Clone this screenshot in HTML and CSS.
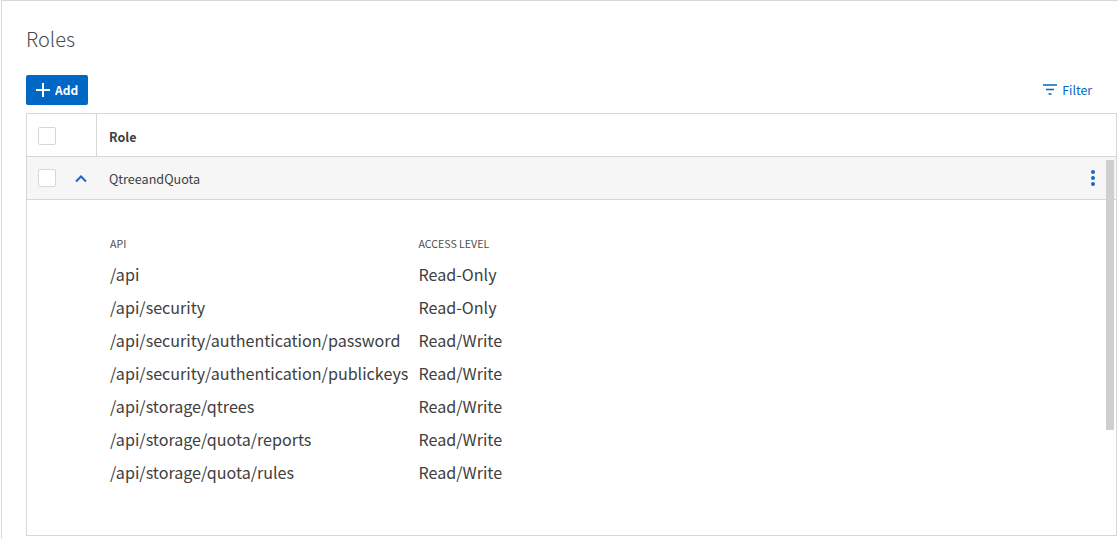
FILE: index.html
```html
<!DOCTYPE html>
<html lang="en">
<head>
<meta charset="utf-8">
<title>Roles</title>
<link rel="stylesheet" href="styles.css">
</head>
<body>
<main class="panel">
  <h1 class="title">Roles</h1>
  <div class="toolbar">
    <button class="add-btn" type="button">
      <svg class="add-icon" width="16" height="16" viewBox="0 0 16 16"><path d="M8 1v14M1 8h14" stroke="#fff" stroke-width="2" fill="none"/></svg>
      <span>Add</span>
    </button>
    <button class="filter-btn" type="button">
      <svg width="14" height="11" viewBox="0 0 14 11"><path d="M0 1h14M3 5.500h8M5.500 10h3" stroke="#0067c5" stroke-width="1.500" fill="none"/></svg>
      <span>Filter</span>
    </button>
  </div>
  <section class="table">
    <div class="scrollbar"></div>
    <div class="head-row">
      <div class="head-check"><span class="checkbox"></span></div>
      <div class="head-role">Role</div>
    </div>
    <div class="data-row">
      <div class="row-check"><span class="checkbox"></span></div>
      <div class="row-toggle">
        <svg width="12" height="8" viewBox="0 0 12 8"><path d="M1 6.500l5-5 5 5" stroke="#1a66c9" stroke-width="2" fill="none"/></svg>
      </div>
      <div class="row-name">QtreeandQuota</div>
      <div class="row-menu"><i></i><i></i><i></i></div>
    </div>
    <div class="details">
      <div class="detail-grid">
        <div class="label">API</div><div class="label">ACCESS LEVEL</div>
        <div class="cell">/api</div><div class="cell">Read-Only</div>
        <div class="cell">/api/security</div><div class="cell">Read-Only</div>
        <div class="cell">/api/security/authentication/password</div><div class="cell">Read/Write</div>
        <div class="cell">/api/security/authentication/publickeys</div><div class="cell">Read/Write</div>
        <div class="cell">/api/storage/qtrees</div><div class="cell">Read/Write</div>
        <div class="cell">/api/storage/quota/reports</div><div class="cell">Read/Write</div>
        <div class="cell">/api/storage/quota/rules</div><div class="cell">Read/Write</div>
      </div>
    </div>
  </section>
</main>
</body>
</html>
```
FILE: styles.css
```css
* { box-sizing: border-box; }
html, body { margin: 0; height: 538px; overflow: hidden; background: #fff; }
body {
  font-family: "Noto Sans CJK SC", "Noto Sans CJK JP", "Open Sans", sans-serif;
  color: #404040;
}
.panel {
  margin-left: 1px;
  width: 1117px;
  height: 538px;
  border-top: 1px solid #d6d6d6;
  border-left: 1px solid #d6d6d6;
  padding: 0 0 0 24px;
}
.title {
  margin: 0;
  padding-top: 24px;
  height: 74px;
  font-size: 20px;
  line-height: 27px;
  font-weight: 300;
  color: #4a4a4a;
}
.toolbar {
  display: flex;
  justify-content: space-between;
  align-items: center;
  height: 38px;
  padding-bottom: 8px;
}
.add-btn {
  display: flex;
  align-items: center;
  gap: 4px;
  width: 62px;
  height: 30px;
  padding: 0 0 0 9px;
  border: 0;
  border-radius: 2px;
  background: #0067c5;
  color: #fff;
  font: 700 12px/1 "Noto Sans CJK SC", sans-serif;
}
.filter-btn {
  display: flex;
  align-items: center;
  gap: 5px;
  margin-right: 26px;
  padding: 0;
  border: 0;
  background: none;
  color: #0067c5;
  font: 400 12.300px/1 "Noto Sans CJK SC", sans-serif;
}
.table {
  position: relative;
  width: 1091px;
  height: 423px;
  border: 1px solid #d6d6d6;
}
.scrollbar {
  position: absolute;
  top: 46px;
  right: 2px;
  width: 8px;
  height: 270px;
  background: #cfcfcf;
}
.head-row {
  display: flex;
  height: 43px;
  border-bottom: 1px solid #d6d6d6;
}
.head-check {
  display: flex;
  align-items: center;
  width: 70px;
  padding: 1px 0 0 11px;
  border-right: 1px solid #d6d6d6;
}
.head-role {
  display: flex;
  align-items: center;
  padding: 2px 0 0 12px;
  font-size: 12.500px;
  font-weight: 700;
}
.checkbox {
  display: block;
  width: 18px;
  height: 18px;
  border: 1px solid #d6d6d6;
  border-radius: 2px;
  background: #fff;
}
.data-row {
  display: flex;
  align-items: center;
  height: 43px;
  background: #f6f6f6;
  border-bottom: 1px solid #d6d6d6;
}
.row-check { width: 47px; padding-left: 11px; }
.row-toggle { display: flex; width: 35px; padding: 2px 0 0 1px; }
.row-name { flex: 1; font-size: 12.600px; }
.row-menu {
  display: flex;
  flex-direction: column;
  gap: 2px;
  margin-right: 21px;
}
.row-menu i {
  display: block;
  width: 4px;
  height: 4px;
  border-radius: 50%;
  background: #1a66c9;
}
.details { padding: 35px 0 0 83px; }
.detail-grid {
  display: grid;
  grid-template-columns: 308.500px auto;
  justify-content: start;
}
.label {
  height: 23px;
  font-size: 10.600px;
  line-height: 18px;
  color: #4d4d4d;
}
.cell {
  height: 33px;
  font-size: 16.100px;
  line-height: 33px;
}
```
